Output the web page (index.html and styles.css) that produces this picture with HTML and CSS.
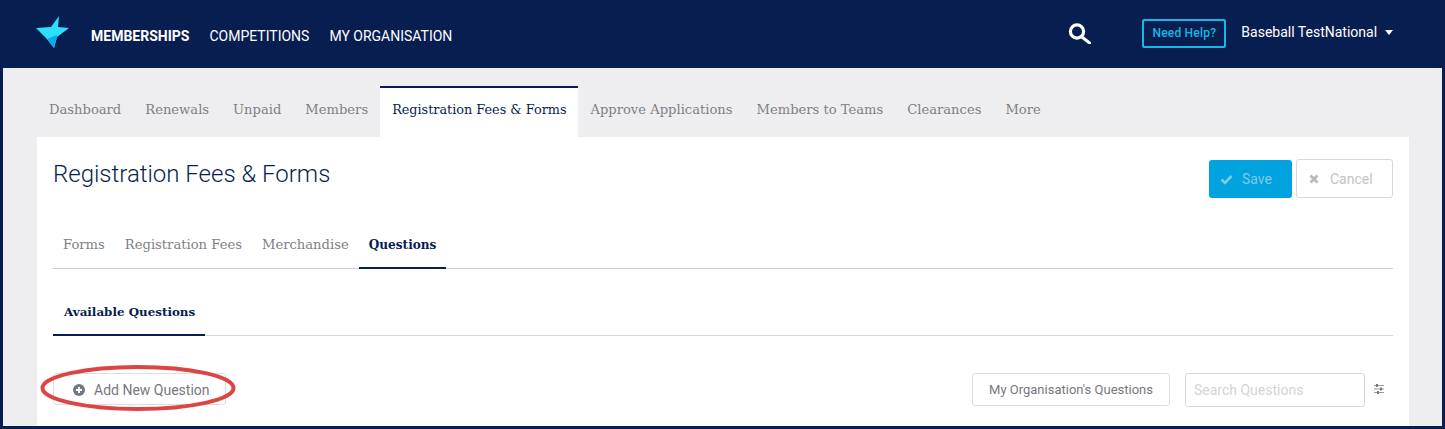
FILE: index.html
```html
<!DOCTYPE html>
<html lang="en">
<head>
<meta charset="utf-8">
<title>Registration Fees &amp; Forms</title>
<link rel="stylesheet" href="styles.css">
</head>
<body>
<div class="frame">
  <header class="topbar">
    <svg class="logo" width="36" height="34" viewBox="0 0 36 34">
      <path d="M0 13 L15 12 L23 1 L22 12 L33 13 L21 22 L18 33 L10 23 Z" fill="#2be0fb"/>
      <path d="M11 24 L21 20 L21 22 L18 33 Z" fill="#12a5ec"/>
    </svg>
    <nav class="mainnav">
      <a class="mainlink strong">MEMBERSHIPS</a>
      <a class="mainlink">COMPETITIONS</a>
      <a class="mainlink">MY ORGANISATION</a>
    </nav>
    <svg class="searchicon" width="24" height="24" viewBox="0 0 24 24">
      <circle cx="10" cy="11.500" r="6.600" fill="none" stroke="#fff" stroke-width="3.200"/>
      <path d="M15 17 L22.500 23" stroke="#fff" stroke-width="3" stroke-linecap="round"/>
    </svg>
    <a class="help">Need Help?</a>
    <div class="user">Baseball TestNational<span class="caret"></span></div>
  </header>
  <main class="content">
    <nav class="pagetabs">
      <a class="pagetab">Dashboard</a>
      <a class="pagetab">Renewals</a>
      <a class="pagetab">Unpaid</a>
      <a class="pagetab">Members</a>
      <a class="pagetab active">Registration Fees &amp; Forms</a>
      <a class="pagetab">Approve Applications</a>
      <a class="pagetab">Members to Teams</a>
      <a class="pagetab">Clearances</a>
      <a class="pagetab">More</a>
    </nav>
    <section class="card">
      <div class="titlerow">
        <h1 class="title">Registration Fees &amp; Forms</h1>
        <div class="actions">
          <button class="btn save">
            <svg width="13" height="11" viewBox="0 0 13 11"><path d="M1.5 5.5 L5 9 L11.5 2" fill="none" stroke="#7fcbe8" stroke-width="2.6"/></svg>
            Save
          </button>
          <button class="btn cancel">
            <svg width="10" height="10" viewBox="0 0 10 10"><path d="M1.5 1.5 L8.5 8.5 M8.5 1.5 L1.5 8.5" fill="none" stroke="#b9b9bd" stroke-width="2.8"/></svg>
            Cancel
          </button>
        </div>
      </div>
      <nav class="subtabs">
        <a class="subtab">Forms</a>
        <a class="subtab">Registration Fees</a>
        <a class="subtab">Merchandise</a>
        <a class="subtab active">Questions</a>
      </nav>
      <nav class="innertabs">
        <a class="innertab">Available Questions</a>
      </nav>
      <div class="toolbar">
        <button class="addbtn">
          <svg width="12" height="12" viewBox="0 0 12 12"><circle cx="6" cy="6" r="6" fill="#77777f"/><path d="M6 3 V9 M3 6 H9" stroke="#fff" stroke-width="1.8"/></svg>
          Add New Question
        </button>
        <svg class="ellipse" width="198" height="50" viewBox="0 0 198 50"><ellipse cx="99" cy="25" rx="95.500" ry="21" fill="none" stroke="#db4642" stroke-width="4"/></svg>
        <button class="orgbtn">My Organisation's Questions</button>
        <input class="search" placeholder="Search Questions">
        <svg class="filter" width="10" height="10" viewBox="0 0 10 10">
          <path d="M0 1.5 H10 M0 5 H10 M0 8.5 H10" stroke="#9a9aa0" stroke-width="1"/>
          <path d="M3 0 V3 M7 3.500 V6.500 M4 7 V10" stroke="#77777f" stroke-width="2"/>
        </svg>
      </div>
    </section>
  </main>
</div>
</body>
</html>
```
FILE: styles.css
```css
* { box-sizing: border-box; }
html, body { margin: 0; height: 100%; }
body { font-family: Roboto, "Liberation Sans", sans-serif; background: #091e50; overflow: hidden; }
.frame { width: 1445px; height: 429px; display: flex; flex-direction: column; }
.topbar { height: 68px; flex: none; display: flex; align-items: center; position: relative; padding-left: 36px; background: #091e50; color: #fff; }
.logo { flex: none; margin-top: -4px; }
.mainnav { display: flex; gap: 20px; margin-left: 19px; padding-top: 4px; }
.mainlink { font-size: 14px; color: #fff; }
.mainlink.strong { font-weight: 700; }
.searchicon { margin-left: 615px; margin-top: -4px; flex: none; }
.help { margin-left: 51px; margin-top: -2px; width: 84px; height: 29px; border: 2px solid #16b7e6; border-radius: 2px; color: #16b7e6; font-size: 12px; font-weight: 500; letter-spacing: .2px; display: flex; align-items: center; justify-content: center; }
.user { margin-left: 15px; margin-top: -4px; font-size: 14px; color: #fff; display: flex; align-items: center; }
.caret { margin-left: 8px; width: 0; height: 0; border: 4px solid transparent; border-top: 5px solid #fff; border-bottom: 0; }
.content { flex: 1; margin: 0 3px 3px; background: #eeeef0; padding: 18px 33px 0 34px; min-height: 0; overflow: hidden; }
.pagetabs { display: flex; height: 51px; }
.pagetab { font-family: "DejaVu Serif", "Liberation Serif", serif; font-size: 13.12px; color: #808086; padding: 0 12px 5px; display: flex; align-items: center; white-space: nowrap; }
.pagetab.active { background: #fff; color: #091e50; border-top: 2px solid #091e50; padding-bottom: 7px; font-size: 12.8px; }
.card { background: #fff; height: 300px; padding: 0 16px; }
.titlerow { display: flex; justify-content: space-between; height: 78px; }
.title { margin: 22px 0 0; font-size: 24px; font-weight: 300; color: #091e50; line-height: 30px; }
.actions { display: flex; gap: 4px; margin-top: 22px; }
.btn { height: 39px; border-radius: 3px; font: 400 14px Roboto, sans-serif; display: flex; align-items: center; padding: 0; }
.save { width: 83px; background: #00a3de; border: 0; color: #7fcbe8; margin-top: 1px; height: 38px; padding-left: 11px; gap: 9px; }
.cancel { width: 97px; background: #fff; border: 1px solid #d9d9dc; color: #c3c3c7; padding-left: 12px; gap: 11px; }
.subtabs { display: flex; height: 54px; border-bottom: 1px solid #cfcfd2; }
.subtab { font-family: "DejaVu Serif", "Liberation Serif", serif; font-size: 13.15px; color: #808086; padding: 6px 10px 0; display: flex; align-items: center; margin-bottom: -1px; border-bottom: 2px solid transparent; white-space: nowrap; }
.subtab.active { color: #091e50; font-weight: 700; font-size: 12.1px; padding-top: 7px; border-bottom-color: #091e50; }
.innertabs { display: flex; height: 67px; border-bottom: 1px solid #d5d5d8; }
.innertab { width: 152px; font-family: "DejaVu Serif", "Liberation Serif", serif; font-size: 11.9px; font-weight: 700; color: #091e50; padding: 21px 0 0 11px; display: flex; align-items: center; margin-bottom: -1px; border-bottom: 2px solid #091e50; white-space: nowrap; }
.toolbar { display: flex; align-items: flex-start; position: relative; margin-top: 37px; height: 34px; }
.addbtn { width: 173px; height: 32px; border: 1px solid #dedee0; border-radius: 3px; background: #fff; color: #77777f; font: 400 14px Roboto, sans-serif; display: flex; align-items: center; gap: 9px; padding: 2px 0 0 19px; white-space: nowrap; }
.ellipse { position: absolute; left: -14px; top: -10px; }
.orgbtn { margin-left: 746px; width: 198px; height: 33px; border: 1px solid #dedee0; border-radius: 3px; background: #fff; color: #77777f; font: 400 13px Roboto, sans-serif; padding: 0; }
.search { margin-left: 15px; width: 180px; height: 34px; border: 1px solid #d9d9dc; border-radius: 3px; padding: 0 8px; font: 400 14px Roboto, sans-serif; outline: none; }
.search::placeholder { color: #d4d4d7; }
.filter { margin-left: 9px; margin-top: 11px; flex: none; }
```
